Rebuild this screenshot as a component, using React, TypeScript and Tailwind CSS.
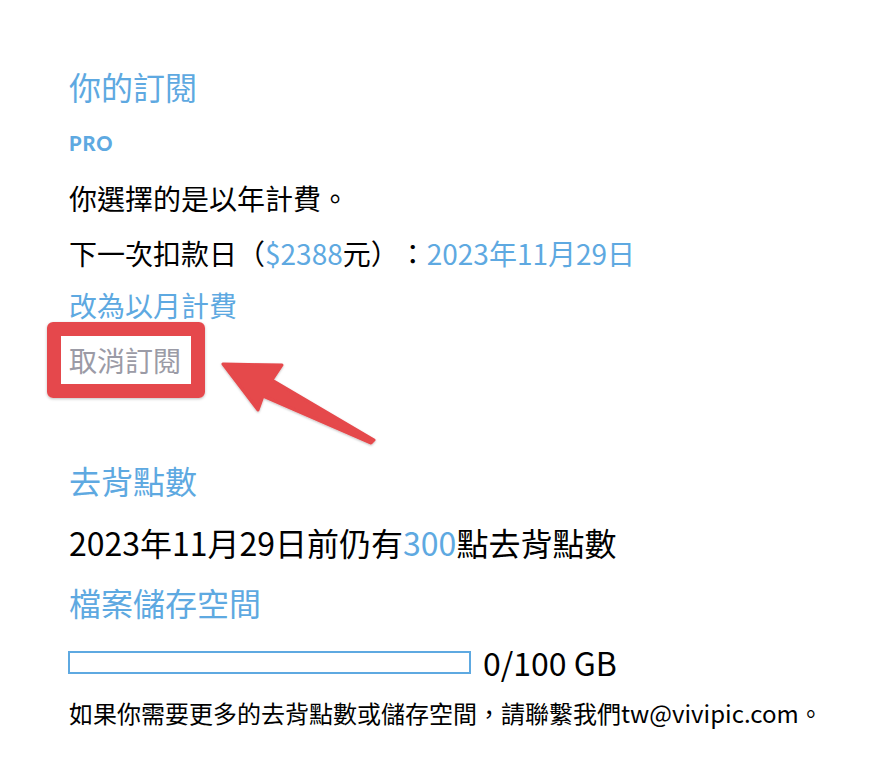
import React from "react";

const blue = "text-[#5ea9e1]";

export default function App() {
  return (
    <div
      className="relative w-[878px] h-[762px] bg-white overflow-hidden text-black [text-spacing-trim:space-all]"
      style={{ fontFamily: '"Noto Sans CJK TC", "Noto Sans", sans-serif' }}
    >
      <div className="flex flex-col pl-[69px] pt-[66px]">
        <h1 className={`text-[32px] leading-[40px] ${blue}`}>你的訂閱</h1>
        <div className={`mt-[25px] text-[20px] leading-[24px] font-black tracking-[0.05em] ${blue}`} style={{ fontFamily: "Lato, sans-serif" }}>PRO</div>
        <p className="mt-[25px] text-[28px] leading-[36px]">你選擇的是以年計費。</p>
        <p className="mt-[19px] text-[28px] leading-[36px]">
          下一次扣款日（<span className={blue}>$2388</span>元）：<span className={blue}>2023年11月29日</span>
        </p>
        <p className={`mt-[16px] text-[28px] leading-[36px] ${blue}`}>改為以月計費</p>
        <p className="mt-[19px] text-[28px] leading-[36px] text-[#9b9ba6]">取消訂閱</p>
        <h2 className={`mt-[82px] text-[32px] leading-[40px] ${blue}`}>去背點數</h2>
        <p className="mt-[22px] text-[32px] leading-[40px]">
          2023年11月29日前仍有<span className={blue}>300</span>點去背點數
        </p>
        <h2 className={`mt-[20px] text-[32px] leading-[40px] ${blue}`}>檔案儲存空間</h2>
        <div className="mt-[20px] flex items-center gap-[12px] -ml-[1px]">
          <div className="w-[403px] h-[23px] border-2 border-[#5ea9e1]" />
          <span className="text-[32px] leading-[40px]">0/100 GB</span>
        </div>
        <p className="mt-[15px] text-[24px] leading-[32px]">
          如果你需要更多的去背點數或儲存空間，請聯繫我們tw@vivipic.com。
        </p>
      </div>

      <div className="absolute left-[47px] top-[322px] w-[158px] h-[76px] rounded-[6px] border-[14px] border-[#e5484c] shadow-[0_1px_3px_rgba(0,0,0,0.25)]" />
      <svg className="absolute left-0 top-0" width="878" height="762" viewBox="0 0 878 762">
        <defs>
          <filter id="sh" x="-20%" y="-20%" width="140%" height="140%">
            <feDropShadow dx="0" dy="1" stdDeviation="1.2" floodColor="#000" floodOpacity="0.25" />
          </filter>
        </defs>
        <path
          d="M223 364 L282 365 L272 380 L374 440 L371 443 L263 396 L258 410 Z"
          fill="#e5484c"
          stroke="#e5484c"
          strokeWidth="3"
          strokeLinejoin="round"
          filter="url(#sh)"
        />
      </svg>
    </div>
  );
}
